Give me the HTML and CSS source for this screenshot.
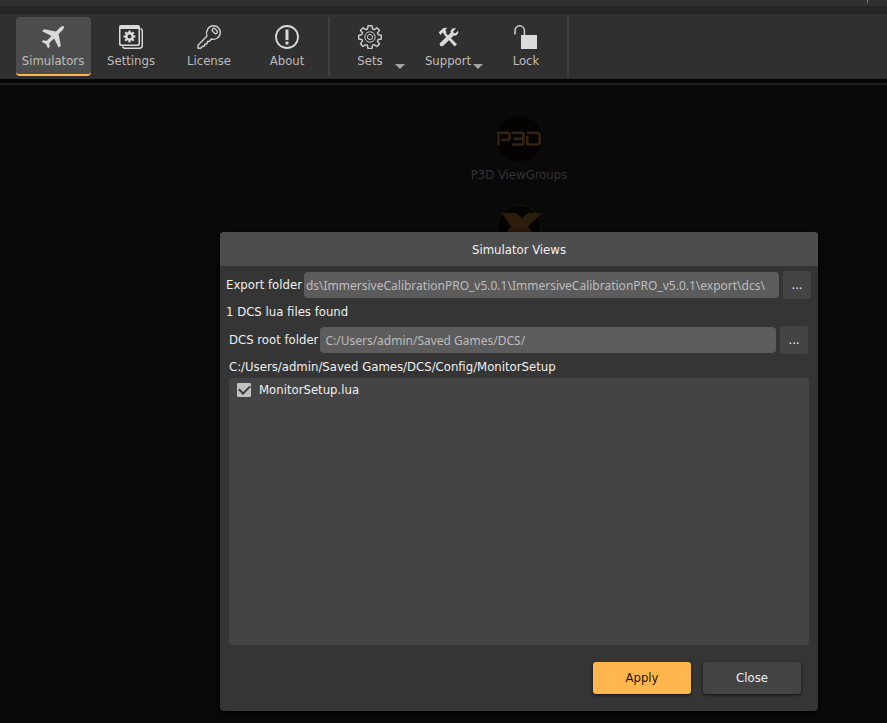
FILE: index.html
```html
<!DOCTYPE html>
<html lang="en">
<head>
<meta charset="utf-8">
<title>Simulator Views</title>
<link rel="stylesheet" href="styles.css">
</head>
<body>
<div class="titlebar"><span class="titlebar-mark"></span></div>
<nav class="toolbar" aria-label="Main">
  <button class="tool tool-active" type="button">
    <svg class="icon" viewBox="0 0 24 24"><path fill="#dadada" d="M22.800 1.200c-.8-.6-2.600.2-4 1.600L15 6.400 3.200 4.200 1.200 6.200l9.300 4.800-4.600 4.800-3.700-.6L.6 16.800l4.300 2.300 2.200 4.300 1.600-1.600-.5-3.700 4.900-4.700 4.700 9.400 2-2L17.600 9.100l3.700-3.900c1.400-1.400 2.200-3.300 1.500-4z"/></svg>
    <span>Simulators</span>
  </button>
  <button class="tool" type="button">
    <svg class="icon" viewBox="0 0 24 24"><path fill="none" stroke="#dadada" stroke-width="1.500" d="M21.500 3.500Q23.300 4 23.300 6v14.500q0 2.800-2.800 2.800H6Q4 23.300 3.500 21.500"/><path fill="#dadada" fill-rule="evenodd" d="M2 0h17q2 0 2 2v17q0 2-2 2H2q-2 0-2-2V2Q0 0 2 0zM1.500 4v14q0 1.500 1.500 1.500h15q1.500 0 1.500-1.500V4z"/><circle cx="10.500" cy="11.500" r="3.200" fill="none" stroke="#dadada" stroke-width="2.400"/><path stroke="#dadada" stroke-width="2.200" d="M10.500 5.500v2.500M10.500 15V17.500M4.500 11.500h2.500M14 11.500H16.500M6.300 7.300l1.800 1.800M12.900 13.900l1.800 1.800M6.300 15.700l1.800-1.800M12.900 9.100l1.800-1.800"/></svg>
    <span>Settings</span>
  </button>
  <button class="tool" type="button">
    <svg class="icon" viewBox="0 0 24 24"><g fill="none" stroke="#d0d0d0" stroke-width="1.400" stroke-linejoin="round"><path d="M9.800 11.200C8.300 6.500 11.500.8 16.500.8c4 0 6.800 3 6.800 6.700 0 4.800-4.800 7.800-9 6.500l-1.800 2.200-2 .3-.4 2.200-2.100.3-.5 2.100-2 .2-1.800 1.900H1V20.300z"/><rect x="14.800" y="4.300" width="6" height="3.400" rx="1.700" transform="rotate(45 17.800 6)"/></g></svg>
    <span>License</span>
  </button>
  <button class="tool" type="button">
    <svg class="icon" viewBox="0 0 24 24"><circle cx="12" cy="12" r="11" fill="none" stroke="#dadada" stroke-width="1.800"/><path fill="#dadada" d="M10.500 4.500h3v10.500h-3zM10.500 16.500h3v3h-3z"/></svg>
    <span>About</span>
  </button>
  <span class="separator"></span>
  <button class="tool" type="button">
    <svg class="icon" viewBox="0 0 24 24"><g fill="none" stroke="#c8c8c8" stroke-width="1.500" stroke-linejoin="round"><path d="M10 .8h4l.6 3.200 1.700.7L19 2.800 21.500 5.300l-2 2.700.8 1.700 3 .5v3.700l-3 .5-.8 1.800 2 2.700-2.700 2.600-2.600-1.900-1.700.7-.5 3.200h-4l-.6-3.200-1.700-.7L5 21.500 2.500 18.700l2-2.600-.8-1.700-3-.5v-3.700l3-.5.8-1.700-2-2.700L5.200 2.800l2.600 1.900L9.500 4z"/><circle cx="12" cy="12" r="5.200" stroke-width="1"/><circle cx="12" cy="12" r="2.600" stroke-width="1"/></g></svg>
    <span>Sets</span>
    <svg class="caret" viewBox="0 0 10 5"><path fill="#a6a6a6" d="M0 0h10L5 5z"/></svg>
  </button>
  <button class="tool" type="button">
    <svg class="icon" viewBox="0 0 24 24"><g fill="#dadada"><path d="M2.800 7.200L7.500 2.900l3.800-.2-2 2.300 1.300 2.200-1.800 1.700-2.100-1.300-2.400 2.300z"/><path d="M9 7.500l12 11.700-2.300 2.300L7.500 9z"/><path d="M20 3.500l-2.800 2.700.4 1.700 1.800.4 2.600-2.600c1 3-1.300 5.500-4.200 4.900L7.300 20.700c-1.900 1.900-5-.9-3-2.900L14.700 7.700C14 4.700 17 2.400 20 3.500z"/></g></svg>
    <span>Support</span>
    <svg class="caret" viewBox="0 0 10 5"><path fill="#a6a6a6" d="M0 0h10L5 5z"/></svg>
  </button>
  <button class="tool" type="button">
    <svg class="icon" viewBox="0 0 24 24"><path fill="none" stroke="#d0d0d0" stroke-width="1.500" d="M1 9.500V5.500a4.700 4.700 0 0 1 9.400 0V10"/><path fill="#dadada" d="M7 10h16v14H7z"/></svg>
    <span>Lock</span>
  </button>
  <span class="separator"></span>
</nav>
<div class="groove"></div>
<main class="workspace">
  <div class="groups">
    <div class="group">
      <svg class="group-logo" viewBox="0 0 46 46"><circle cx="23" cy="23" r="23" fill="#050302"/><g fill="none" stroke="#35230c" stroke-width="2.600"><path d="M2.500 29.500V16.700h9q2 0 2 2v3q0 2-2 2H5"/><path d="M16 16.700h9.500q2 0 2 2v7.800q0 2-2 2H16M18 22.700h9"/><path d="M31.300 16.700h9.500q3 0 3 3v5.800q0 3-3 3h-9.500v-8.500"/></g></svg>
      <span>P3D ViewGroups</span>
    </div>
    <div class="group">
      <svg class="group-logo" viewBox="0 0 46 46"><circle cx="23" cy="23" r="22" fill="#050403" stroke="#1b150b"/><path fill="#2c1e0a" d="M6 9h14l6 5 6-5h14L32 22l12 18H30l-7-9-7 9H2l13-18z"/></svg>
    </div>
  </div>
  <div class="overlay">
    <form class="dialog" role="dialog" aria-labelledby="dialog-title">
      <h1 class="dialog-title" id="dialog-title">Simulator Views</h1>
      <div class="dialog-body">
        <div class="field">
          <label for="export-folder">Export folder</label>
          <input class="path path-tight" id="export-folder" type="text" value="ds\ImmersiveCalibrationPRO_v5.0.1\ImmersiveCalibrationPRO_v5.0.1\export\dcs\">
          <button class="browse" type="button" aria-label="Browse export folder">...</button>
        </div>
        <p class="note">1 DCS lua files found</p>
        <div class="root">
          <div class="field">
            <label for="root-folder">DCS root folder</label>
            <input class="path" id="root-folder" type="text" value="C:/Users/admin/Saved Games/DCS/">
            <button class="browse" type="button" aria-label="Browse root folder">...</button>
          </div>
          <p class="note">C:/Users/admin/Saved Games/DCS/Config/MonitorSetup</p>
        </div>
        <div class="files">
          <label class="file"><input class="check" type="checkbox" checked>MonitorSetup.lua</label>
        </div>
        <div class="actions">
          <button class="action action-primary" type="submit">Apply</button>
          <button class="action" type="button">Close</button>
        </div>
      </div>
    </form>
  </div>
</main>
</body>
</html>
```
FILE: styles.css
```css
* { box-sizing: border-box; }

body {
  margin: 0;
  min-height: 100vh;
  display: flex;
  flex-direction: column;
  background: #090909;
  color: #f0f0f0;
  font: 13px/16px "DejaVu Sans Condensed", "Noto Sans", sans-serif;
}

button, input { font: inherit; color: inherit; margin: 0; }
button { border: 0; padding: 0; }
p, h1 { margin: 0; font: inherit; }

.titlebar {
  display: flex;
  justify-content: flex-end;
  height: 14px;
  padding-right: 19px;
  background: #303030;
  border-bottom: 8px solid #242424;
}
.titlebar-mark { width: 1px; height: 3px; background: #777; }

.toolbar {
  display: flex;
  gap: 3px;
  padding: 3px 16px;
  background: #303030;
}
.tool {
  position: relative;
  display: flex;
  flex-direction: column;
  align-items: center;
  gap: 4px;
  width: 75px;
  height: 59px;
  padding: 8px 1px 0 0;
  border-radius: 4px;
  background: transparent;
  color: #bdbdbd;
}
.tool-active {
  background: #4d4d4d;
  border-bottom: 2px solid #ffb74d;
}
.icon { width: 24px; height: 24px; flex: none; }
.caret {
  position: absolute;
  right: 3px;
  bottom: 7px;
  width: 10px;
  height: 5px;
}
.separator { width: 2px; background: #404040; }

.groove {
  height: 6px;
  background: #060606;
  border-bottom: 2px solid #1d1d1d;
}

.workspace {
  flex: 1;
  display: grid;
  padding-left: 151px;
}
.groups, .overlay { grid-area: 1 / 1; }
.groups {
  display: flex;
  flex-direction: column;
  align-items: center;
  gap: 21px;
  padding-top: 31px;
}
.group {
  display: flex;
  flex-direction: column;
  align-items: center;
  gap: 5px;
  color: #343434;
}
.group-logo { width: 46px; height: 46px; }

.overlay {
  z-index: 1;
  display: flex;
  justify-content: center;
  padding: 147px 12px 12px;
}
.dialog {
  display: flex;
  flex-direction: column;
  width: 100%;
  max-width: 598px;
  border-radius: 4px;
  background: #353535;
  box-shadow: 0 2px 6px #000;
}
.dialog-title {
  height: 34px;
  line-height: 36px;
  text-align: center;
  background: #4d4d4d;
  border-radius: 4px 4px 0 0;
}
.dialog-body {
  flex: 1;
  display: flex;
  flex-direction: column;
  padding: 5px 7px 17px 6px;
}
.field { display: flex; align-items: center; gap: 2px; line-height: 18px; }
.path {
  flex: 1;
  min-width: 0;
  height: 26px;
  padding: 0 5px;
  border: 0;
  border-radius: 4px;
  background: #5c5c5c;
  color: #bcbcbc;
  font: 12px "Noto Sans", sans-serif;
}
.path-tight { padding: 0 2px; }
.browse {
  width: 28px;
  height: 28px;
  margin-left: 2px;
  border-radius: 3px;
  background: #444;
}
.note { height: 24px; line-height: 26px; }
.root { padding: 3px 3px 0; }
.files {
  flex: 1;
  min-height: 200px;
  margin: 0 2px 0 3px;
  padding: 3px 8px;
  border-radius: 4px;
  background: #444;
}
.file { display: flex; align-items: center; gap: 8px; height: 18px; }
.check {
  appearance: none;
  display: grid;
  place-items: center;
  width: 14px;
  height: 14px;
  margin: 0;
  border-radius: 1px;
  background: #c0c0c0;
}
.check:checked::before {
  content: "";
  width: 9px;
  height: 5px;
  margin-bottom: 3px;
  border: solid #3a3a3a;
  border-width: 0 0 2px 2px;
  transform: rotate(-45deg);
}
.actions {
  display: flex;
  justify-content: flex-end;
  gap: 12px;
  padding: 17px 10px 0 0;
}
.action {
  width: 98px;
  height: 32px;
  border-radius: 3px;
  background: #444;
  line-height: 18px;
  box-shadow: 0 1px 3px #111;
}
.action-primary { background: #ffb74d; color: #1c1408; }
```
